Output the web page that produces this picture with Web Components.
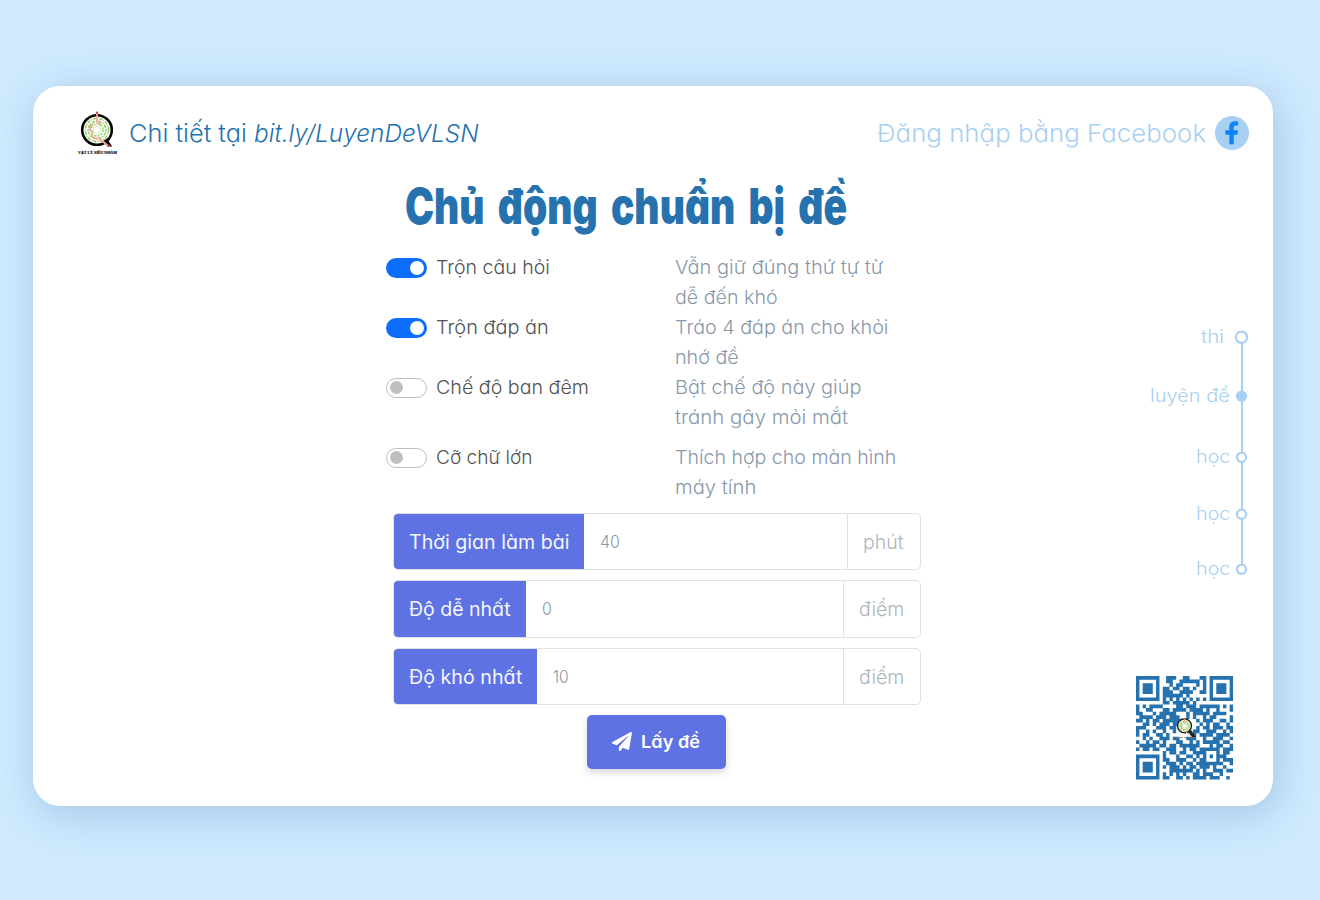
<!DOCTYPE html>
<html lang="vi">
<head>
<meta charset="utf-8">
<title>Luyện đề</title>
<style>
html,body{margin:0;height:100%}
body{background:#d0ebff;font-family:Inter,"Noto Sans",sans-serif;font-feature-settings:"cv11","ss03";overflow:hidden}
</style>
</head>
<body>
<exam-page></exam-page>
<script>
const mount=(el,html)=>{el.attachShadow({mode:'open'}).innerHTML=html;};

/* One line of text that fills a given width. */
customElements.define('fit-text',class extends HTMLElement{
  connectedCallback(){
    if(this.shadowRoot)return;
    const w=+this.getAttribute('w');
    mount(this,`<style>:host{display:block;flex:none;width:${w}px;white-space:nowrap}span{display:inline-block;transform-origin:0 50%}</style><span><slot></slot></span>`);
    const s=this.shadowRoot.querySelector('span');
    s.style.transform=`scaleX(${w/s.offsetWidth})`;
  }
});

customElements.define('brand-logo',class extends HTMLElement{
  connectedCallback(){
    mount(this,`<style>:host{display:block;flex:none;width:40px;height:46px}svg{display:block;overflow:visible}
    text{font:900 4.5px "Liberation Serif",serif}</style>
    <svg width="40" height="46" viewBox="0 0 40 46">
    <circle cx="19" cy="20" r="14.8" fill="#fff" stroke="#080808" stroke-width="2.6"/>
    <path d="M25 31l5.2 5.400h4L29 28.500z" fill="#080808"/>
    <g fill="none" stroke="#93cf62"><circle cx="19" cy="20" r="11.6" stroke-width="1.7" stroke-dasharray="3 1 1 1.3"/><circle cx="19" cy="20" r="8.8" stroke-width="1.5" stroke-dasharray="1.5 1.2 3 1"/><circle cx="19" cy="20" r="6" stroke-width="1.5" stroke-dasharray="2.2 1.2"/><circle cx="19" cy="20" r="3.7" stroke-width=".7" opacity=".7"/></g>
    <path d="M19 3v9l3 .2-.3 3M15 14l-3 2v4l2 1.500v4.500l3 2.500 4-.3 3 2.500 6.500 5.500" fill="none" stroke="#f0aaa4" stroke-width="1.8"/>
    <circle cx="19" cy="2.800" r="1.300" fill="#c54c4c"/><circle cx="30.500" cy="35.700" r="1.300" fill="#c54c4c"/>
    <text x="0" y="44" textLength="39" lengthAdjust="spacingAndGlyphs" stroke="#000" stroke-width=".15">VẬT LÝ SIÊU NHÂM</text></svg>`);
  }
});

customElements.define('top-bar',class extends HTMLElement{
  connectedCallback(){
    mount(this,`<style>:host{display:flex;align-items:center;height:94px;padding:0 24px 0 46px;box-sizing:border-box;color:#2572ae;font-size:24.500px;line-height:30px;font-weight:300}
    .a{margin-left:11px}.i{font-style:italic;margin-left:7px}.fb{margin-left:auto;color:#a8d0f2;margin-right:9px}.c{display:block;flex:none}</style>
    <brand-logo></brand-logo>
    <fit-text class="a" w="118">Chi tiết tại</fit-text><fit-text class="i" w="225">bit.ly/LuyenDeVLSN</fit-text>
    <fit-text class="fb" w="329">Đăng nhập bằng Facebook</fit-text>
    <svg class="c" width="34" height="34" viewBox="0 0 34 34"><circle cx="17" cy="17" r="17" fill="#a8d0f2"/><path d="M14.3 28.300V18.700h-4v-4.500h4v-3c0-4 2.200-6 5.800-6 1.400 0 2.700.2 3 .3v4h-2.200c-1.800 0-2.100 1-2.100 2.200v2.500h4.200l-.6 4.500h-3.600v9.600z" fill="#0a84ff"/></svg>`);
  }
});

customElements.define('option-row',class extends HTMLElement{
  connectedCallback(){
    const on=this.hasAttribute('on');
    mount(this,`<style>:host{display:grid;grid-template-columns:50px 239px 1fr;height:60px;line-height:30px;font-size:18.5px;font-weight:300;color:#505256}
    .t{box-sizing:border-box;width:41px;height:20px;border-radius:10px;margin-top:5.500px;padding:${on?3:2}px;display:flex;${on?'background:#0d6efd;justify-content:flex-end':'border:1.300px solid #bfbfbf;padding-left:2.700px'}}
    .t i{display:block;width:${on?14:13}px;height:${on?14:13}px;border-radius:50%;background:${on?'#fff':'#bfbfbf'}}
    .d{color:#8898aa}</style>
    <div class="t"><i></i></div><div><slot></slot></div><div class="d"><slot name="desc"></slot></div>`);
  }
});

customElements.define('field-group',class extends HTMLElement{
  connectedCallback(){
    const g=n=>this.getAttribute(n);
    mount(this,`<style>:host{display:flex;box-sizing:border-box;width:528px;height:57.500px;border:1.300px solid #dee2e6;border-radius:5px;overflow:hidden;font-size:19.500px;line-height:56px;font-weight:300}
    .l{background:#5e72e4;color:#f4f6ff;width:${g('lw')}px;padding-left:15px;box-sizing:border-box;font-weight:400}
    .v{flex:1;padding-left:16px;color:#8898aa;font-size:17.500px;line-height:55px}
    .u{border-left:1.300px solid #dee2e6;padding:0 16px 0 15px;color:#adb5bd}</style>
    <div class="l"><slot name="label"></slot></div><div class="v"><slot name="value"></slot></div><div class="u"><slot name="unit"></slot></div>`);
  }
});

customElements.define('submit-button',class extends HTMLElement{
  connectedCallback(){
    mount(this,`<style>:host{display:flex;align-items:center;box-sizing:border-box;width:139px;height:54px;padding:0 0 2px 25px;border-radius:5px;background:#5e72e4;color:#fff;font-size:17.500px;font-weight:600;box-shadow:0 4px 7px rgba(50,50,93,.18)}
    svg{margin-right:9px;flex:none}</style>
    <svg width="20" height="19" viewBox="0 0 512 512" preserveAspectRatio="none" fill="#fff"><path d="M476 3.200L12.500 270.600c-18.100 10.400-15.800 35.600 2.200 43.200L121 358.400l287.300-253.200c5.500-4.900 13.300 2.600 8.600 8.300L176 407v80.500c0 23.600 28.500 32.900 42.500 15.800L282 426l124.600 52.200c14.200 6 30.400-2.900 33-18.200l72-432C515 7.800 493.300-6.800 476 3.200z"/></svg><slot></slot>`);
  }
});

customElements.define('step-item',class extends HTMLElement{
  connectedCallback(){
    const fill=this.hasAttribute('active')?'#a8d0f2':'#fff', s=this.hasAttribute('big')?13:11;
    mount(this,`<style>:host{display:flex;align-items:center;justify-content:flex-end;height:24px;line-height:24px;position:relative}
    svg{display:block;flex:none;margin-left:${this.getAttribute('gap')}px;margin-right:${(13-s)/2}px;overflow:visible}</style><slot></slot><svg width="${s}" height="${s}"><circle cx="${s/2}" cy="${s/2-.3}" r="${s/2-.9}" fill="${fill}" stroke="#a8d0f2" stroke-width="2.200"/></svg>`);
  }
});

customElements.define('step-line',class extends HTMLElement{
  connectedCallback(){
    mount(this,`<style>:host{display:block;position:relative;width:110px;color:#a8d0f2;font-size:18px;font-weight:300}
    :host::before{content:"";position:absolute;right:5.500px;top:12px;bottom:12px;width:2px;background:#a8d0f2}</style><slot></slot>`);
  }
});

const QR=[
'11111110011100110001101111111',
'10000010011001111110101000001',
'10111010001011000010101011101',
'10111010110110110100101011101',
'10111010111001111001101011101',
'10000010111111010000001000001',
'11111110101010101010101111111',
'00000000110111110100000000000',
'10101111000011011101111110101',
'10011000110111101111010010001',
'11000101111100010111110111100',
'01111011101110010100101100001',
'11010110111111000010111001101',
'00110101110110000001010110010',
'11100011101100000010110111011',
'10010100100100000110011100101',
'10110011010000000101111011110',
'00101001110110011100100111001',
'10010110100011001010111110110',
'01111101101101111110001011001',
'10110110011100101101111110111',
'00000000101101100111100010110',
'11111110100010011010101011100',
'10000010110011100101100010111',
'10111010011101011011111111001',
'10111010101110101101110100100',
'10111010001111111010100111011',
'10000010101010100110111001000',
'11111110110011010111101110010'];
customElements.define('qr-code',class extends HTMLElement{
  connectedCallback(){
    let d='';
    QR.forEach((r,y)=>[...r].forEach((c,x)=>{if(c==='1')d+=`M${x} ${y}h1.020v1.020h-1.020z`}));
    mount(this,`<style>:host{display:block;width:97px;height:103.500px}svg{display:block;overflow:visible}</style>
    <svg width="97" height="103.500" viewBox="0 0 97 103.500"><path transform="scale(3.345 3.569)" fill="#2572ae" d="${d}"/>
    <path d="M52 56l4 5h4l-5-7z" fill="#222"/><circle cx="48.500" cy="49.800" r="7" fill="#dcecc4" stroke="#181818" stroke-width="1.300"/>
    <circle cx="48.500" cy="49.800" r="4.300" fill="none" stroke="#a9d284" stroke-width="1.600" stroke-dasharray="2 1"/><path d="M48.500 43v4l1.500 1M45.500 48v4l3 2.500 7 6.500" fill="none" stroke="#e9b5a0"/><circle cx="48.500" cy="49.800" r="1.400" fill="#fff"/><path d="M40 61.500h18" stroke="#777" stroke-width=".8" stroke-dasharray="3 1"/></svg>`);
  }
});

customElements.define('exam-page',class extends HTMLElement{
  connectedCallback(){
    mount(this,`<style>
    :host{display:block;padding:86px 47px 94px 32.500px;height:900px;box-sizing:border-box}
    main{display:grid;grid-template:94px 626px/353.500px 540px 1fr;height:720px;border-radius:27px;background:#fff;box-shadow:4px 8px 42px 2px rgba(50,105,165,.27)}
    top-bar{grid-column:1/-1;margin-left:-1px}
    .form{grid-column:2}
    h1{margin:-4px 0 0 18.500px;height:76px;font-size:50px;line-height:60px;font-weight:900;word-spacing:7px;color:#2572ae}
    .late{margin-top:10px}
    .fields{display:flex;flex-direction:column;gap:10px;padding:10.500px 0 10px 7px}
    submit-button{margin-left:200.500px}
    aside{display:flex;flex-direction:column;align-items:flex-end;padding-right:25px}
    step-line{margin-top:145px}
    qr-code{margin:95px 15px 0 0}
    </style>
    <main>
      <top-bar></top-bar>
      <section class="form">
        <h1><fit-text w="442">Chủ động chuẩn bị đề</fit-text></h1>
        <option-row on><fit-text w="114">Trộn câu hỏi</fit-text><div slot="desc"><fit-text w="208">Vẫn giữ đúng thứ tự từ</fit-text><fit-text w="103">dễ đến khó</fit-text></div></option-row>
        <option-row on><fit-text w="113">Trộn đáp án</fit-text><div slot="desc"><fit-text w="213">Tráo 4 đáp án cho khỏi</fit-text><fit-text w="64">nhớ đề</fit-text></div></option-row>
        <option-row><fit-text w="153">Chế độ ban đêm</fit-text><div slot="desc"><fit-text w="186">Bật chế độ này giúp</fit-text><fit-text w="173">tránh gây mỏi mắt</fit-text></div></option-row>
        <option-row class="late"><fit-text w="97">Cỡ chữ lớn</fit-text><div slot="desc"><fit-text w="221">Thích hợp cho màn hình</fit-text><fit-text w="81">máy tính</fit-text></div></option-row>
        <div class="fields">
          <field-group lw="189.500"><fit-text slot="label" w="160">Thời gian làm bài</fit-text><fit-text slot="value" w="20">40</fit-text><fit-text slot="unit" w="41">phút</fit-text></field-group>
          <field-group lw="132"><fit-text slot="label" w="102">Độ dễ nhất</fit-text><fit-text slot="value" w="10">0</fit-text><fit-text slot="unit" w="45">điểm</fit-text></field-group>
          <field-group lw="143"><fit-text slot="label" w="113">Độ khó nhất</fit-text><fit-text slot="value" w="16">10</fit-text><fit-text slot="unit" w="45">điểm</fit-text></field-group>
        </div>
        <submit-button><fit-text w="59">Lấy đề</fit-text></submit-button>
      </section>
      <aside>
        <step-line>
          <step-item big gap="11"><fit-text w="23">thi</fit-text></step-item>
          <step-item active gap="6" style="margin-top:35px"><fit-text w="80">luyện đề</fit-text></step-item>
          <step-item gap="6" style="margin-top:37px"><fit-text w="34">học</fit-text></step-item>
          <step-item gap="6" style="margin-top:33px"><fit-text w="34">học</fit-text></step-item>
          <step-item gap="6" style="margin-top:31px"><fit-text w="34">học</fit-text></step-item>
        </step-line>
        <qr-code></qr-code>
      </aside>
    </main>`);
  }
});
</script>
</body>
</html>
